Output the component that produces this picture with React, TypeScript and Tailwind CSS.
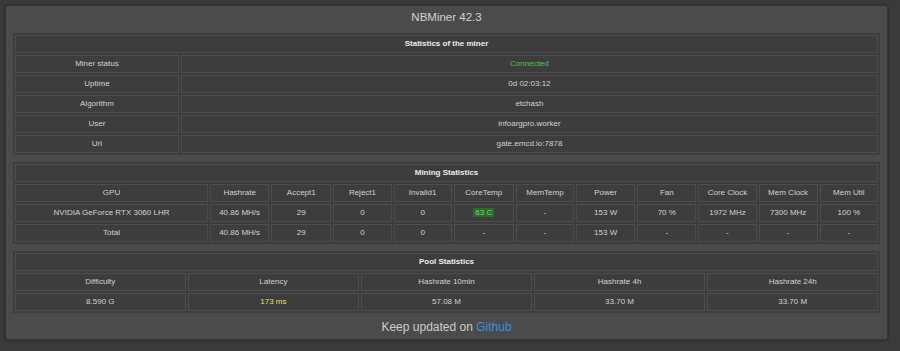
import React from 'react';

const minerRows: [string, React.ReactNode][] = [
    ['Miner status', <span className="text-[#4fc24f]">Connected</span>],
    ['Uptime', '0d 02:03:12'],
    ['Algorithm', 'etchash'],
    ['User', 'infoargpro.worker'],
    ['Url', 'gate.emcd.io:7878'],
];

const gpuCols = ['GPU', 'Hashrate', 'Accept1', 'Reject1', 'Invalid1', 'CoreTemp', 'MemTemp', 'Power', 'Fan', 'Core Clock', 'Mem Clock', 'Mem Util'];
const gpuWidths = [199, 61, 62, 60, 60, 62, 60, 61, 61, 60, 61, 60];

const gpuRows: React.ReactNode[][] = [
    ['NVIDIA GeForce RTX 3060 LHR', '40.86 MH/s', '29', '0', '0',
        <span className="bg-[#2d6b2d] px-[2px] text-[#73d873]">63 C</span>,
        '-', '153 W', '70 %', '1972 MHz', '7300 MHz', '100 %'],
    ['Total', '40.86 MH/s', '29', '0', '0', '-', '-', '153 W', '-', '-', '-', '-'],
];

const poolCols = ['Difficulty', 'Latency', 'Hashrate 10min', 'Hashrate 4h', 'Hashrate 24h'];
const poolRow: React.ReactNode[] = ['8.590 G', <span className="text-[#e3e35a]">173 ms</span>, '57.08 M', '33.70 M', '33.70 M'];

const cell = 'h-[18px] p-0 border border-[#4d4d4d] text-center align-middle leading-none whitespace-nowrap overflow-hidden';

function Section({ title, widths, children }: { title: string; widths: number[]; children: React.ReactNode }) {
    const total = widths.reduce((a, b) => a + b, 0);
    return (
        <table className="w-full table-fixed border-separate border-spacing-[2px] bg-[#3d3d3d] text-[8px] text-[#d2d2d2]">
            <colgroup>
                {widths.map((w, i) => (
                    <col key={i} style={{ width: `${(w / total) * 100}%` }} />
                ))}
            </colgroup>
            <tbody>
                <tr>
                    <td colSpan={widths.length} className={`${cell} h-[17px] font-bold text-[#ececec]`}>{title}</td>
                </tr>
                {children}
            </tbody>
        </table>
    );
}

export default function App() {
    return (
        <div className="h-[351px] w-[900px] bg-[#3a3a3a] pt-[5px] pl-[5px] font-['Liberation_Sans',Arial,sans-serif]">
            <div className="w-[883px] h-[335px] bg-[#4b4b4b] rounded-[3px] border border-[#353535] shadow-[0_0_3px_rgba(0,0,0,0.4)] px-[7px]">
                <div className="h-[27px] pb-[3px] flex items-center justify-center text-[11.5px] text-[#d2d2d2]">NBMiner 42.3</div>

                <Section title="Statistics of the miner" widths={[165, 702]}>
                    {minerRows.map(([k, v]) => (
                        <tr key={k}>
                            <td className={cell}>{k}</td>
                            <td className={cell}>{v}</td>
                        </tr>
                    ))}
                </Section>

                <div className="h-[7px]" />

                <Section title="Mining Statistics" widths={gpuWidths}>
                    <tr>
                        {gpuCols.map((c) => (
                            <td key={c} className={cell}>{c}</td>
                        ))}
                    </tr>
                    {gpuRows.map((row, r) => (
                        <tr key={r}>
                            {row.map((v, i) => (
                                <td key={i} className={cell}>{v}</td>
                            ))}
                        </tr>
                    ))}
                </Section>

                <div className="h-[7px]" />

                <Section title="Pool Statistics" widths={[173, 174, 173, 174, 173]}>
                    <tr>
                        {poolCols.map((c) => (
                            <td key={c} className={cell}>{c}</td>
                        ))}
                    </tr>
                    <tr>
                        {poolRow.map((v, i) => (
                            <td key={i} className={cell}>{v}</td>
                        ))}
                    </tr>
                </Section>

                <div className="h-[28px] flex items-center justify-center text-[12px] text-[#cccccc]">
                    Keep updated on&nbsp;<span className="text-[#3b8fe0]">Github</span>
                </div>
            </div>
        </div>
    );
}
